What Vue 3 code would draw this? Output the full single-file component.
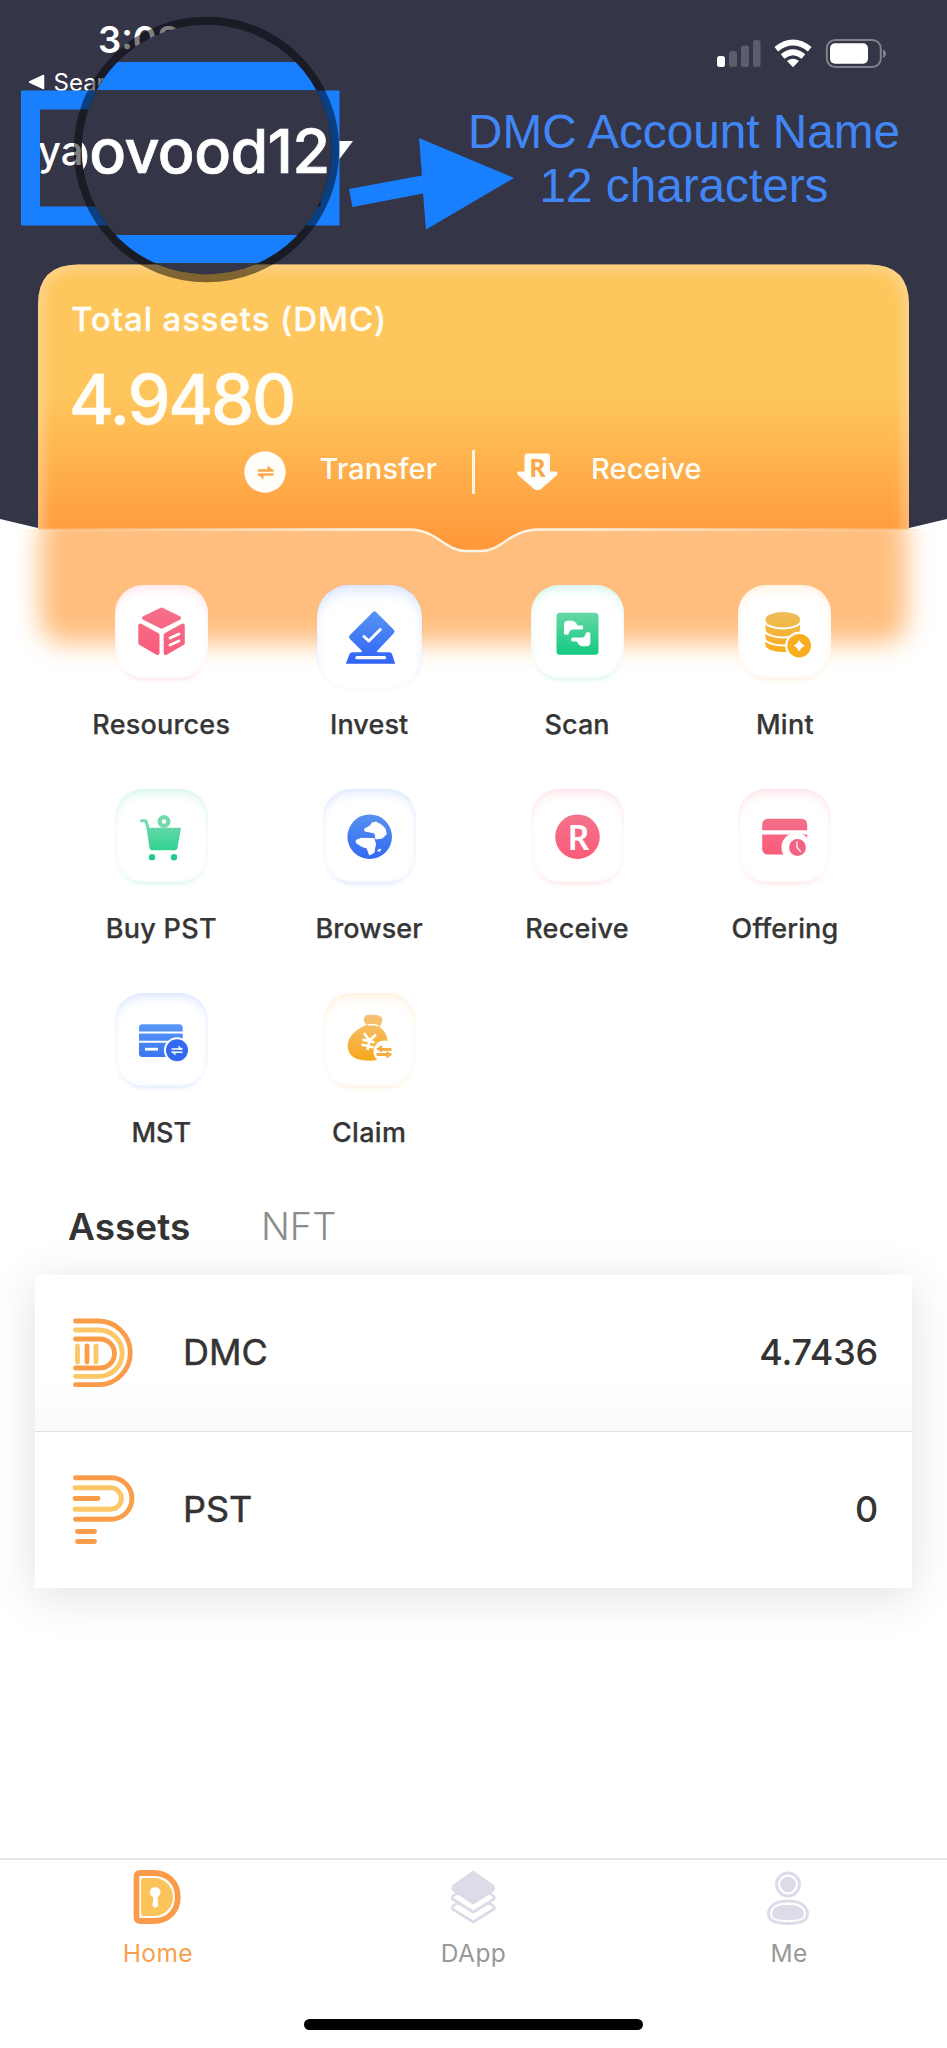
<script setup>
const tiles = [
  { id: 'resources', label: 'Resources', tone: 'pink', box: '115 585 93 93', ls: 0.2 },
  { id: 'invest', label: 'Invest', tone: 'blue', box: '323.5 591 93 93', ls: 0.1, large: true },
  { id: 'scan', label: 'Scan', tone: 'green', box: '530.5 585 93 93', ls: 0.1 },
  { id: 'mint', label: 'Mint', tone: 'gold', box: '738.5 585 93 93', ls: 0.3 },
  { id: 'buy', label: 'Buy PST', tone: 'green', box: '115 789 93 93', ls: 0.3 },
  { id: 'browser', label: 'Browser', tone: 'blue', box: '323 789 93 93', ls: 0.1 },
  { id: 'receive', label: 'Receive', tone: 'pink', box: '530.5 789 93 93', ls: 0.2 },
  { id: 'offering', label: 'Offering', tone: 'pink', box: '738.5 789 93 93', ls: 0.1 },
  { id: 'mst', label: 'MST', tone: 'blue', box: '115 993 93 93', ls: 0 },
  { id: 'claim', label: 'Claim', tone: 'gold', box: '323 993 93 93', ls: 0.3 },
]
</script>

<template>
  <div class="screen">
    <section class="hero">
      <div class="status">
        <span class="time">3:08</span>
        <div class="indicators">
          <svg width="172" height="32" viewBox="716 38 172 32">
            <rect x="717" y="56" width="8" height="11" rx="2.5" fill="#fff" />
            <rect x="729" y="51" width="8" height="16" rx="2.5" fill="#5d5e6d" />
            <rect x="741" y="45.500" width="8" height="21.500" rx="2.500" fill="#5d5e6d" />
            <rect x="753" y="40" width="7.500" height="27" rx="2.500" fill="#5d5e6d" />
            <g fill="none" stroke="#fff" stroke-width="5.800">
              <path d="M776.300 49.200Q793 35.800 809.700 49.200" />
              <path d="M782.600 56.600Q793 48 803.400 56.600" />
            </g>
            <path d="M787 61Q793 56.600 799 61L793 67.200Z" fill="#fff" />
            <rect x="826.800" y="40" width="54" height="27" rx="8.500" fill="none" stroke="#80818c" stroke-width="2" />
            <rect x="830" y="43.300" width="38" height="20.500" rx="5" fill="#fff" />
            <path d="M883 49.500Q886 50.500 886 53.500T883 58Z" fill="#80818c" />
          </svg>
        </div>
      </div>
      <div class="back">
        <svg width="17" height="16" viewBox="0 0 17 16"><path d="M1.500 8L15.500 1.500V14.500Z" fill="#fff" stroke="#fff" stroke-width="1.500" stroke-linejoin="round" /></svg>
        <span>Search</span>
      </div>
      <div class="account">
        <span>ya</span>
        <svg width="30" height="20" viewBox="0 0 30 20"><path d="M0 0H30L15 20Z" fill="#fff" /></svg>
      </div>

      <svg class="markup" width="540" height="290" viewBox="0 0 540 290">
        <rect x="30.500" y="100" width="299.500" height="116" fill="none" stroke="#187fff" stroke-width="19" />
        <path d="M349 189L422 175.500L419 138L514 178L426 229.500L423 193.500L352.500 207Z" fill="#187fff" />
        <clipPath id="lens"><circle cx="206.500" cy="149.500" r="125" /></clipPath>
        <g clip-path="url(#lens)">
          <rect x="70" y="15" width="275" height="270" fill="#343648" />
          <rect x="70" y="62" width="275" height="28" fill="#187fff" />
          <rect x="70" y="235" width="275" height="28" fill="#187fff" />
          <text class="lens-text" x="53" y="173" textLength="277">oovood12</text>
        </g>
        <circle cx="206.500" cy="149.500" r="128.700" fill="none" stroke="#000" stroke-opacity=".5" stroke-width="8" />
      </svg>
      <div class="note">DMC Account Name<br />12 characters</div>
    </section>

    <section class="balance">
      <div class="glow"><i></i></div>
      <svg class="card-shape" width="871" height="290" viewBox="38 264 871 290">
        <defs>
          <linearGradient id="gold" gradientUnits="userSpaceOnUse" x1="0" y1="264" x2="0" y2="551">
            <stop offset="0" stop-color="#fec75d" />
            <stop offset=".46" stop-color="#fec65c" />
            <stop offset=".92" stop-color="#ff9d3f" />
            <stop offset="1" stop-color="#ff9838" />
          </linearGradient>
          <clipPath id="card-clip"><path d="M38 529.500V304.500Q38 264.500 78 264.500H869Q909 264.500 909 304.500V529.500H538C510 529.500 502 551 481 551H466C445 551 437 529.500 409 529.500Z" /></clipPath>
          <filter id="soft" x="-10%" y="-10%" width="120%" height="130%"><feGaussianBlur stdDeviation="6" /></filter>
        </defs>
        <g clip-path="url(#card-clip)">
          <rect x="38" y="264" width="871" height="290" fill="url(#gold)" />
          <path d="M38 580V304Q38 264 78 264H869Q909 264 909 304V580" fill="none" stroke="#ffe0b4" stroke-opacity=".6" stroke-width="11" filter="url(#soft)" />
        </g>
        <linearGradient id="edge" gradientUnits="userSpaceOnUse" x1="38" y1="0" x2="909" y2="0">
          <stop offset="0" stop-color="#fff0df" stop-opacity=".15" />
          <stop offset=".38" stop-color="#fff3e4" />
          <stop offset=".62" stop-color="#fff3e4" />
          <stop offset="1" stop-color="#fff0df" stop-opacity=".15" />
        </linearGradient>
        <path d="M38 529.500H409C437 529.500 445 551 466 551H481C502 551 510 529.500 538 529.500H909" fill="none" stroke="url(#edge)" stroke-width="2.400" />
      </svg>
      <div class="total-label">Total assets (DMC)</div>
      <div class="total">4.9480</div>
      <div class="actions">
        <svg width="42" height="42" viewBox="0 0 42 42">
          <circle cx="21" cy="21" r="20.700" fill="#fffefa" />
          <path d="M14 19.500H29.500M14 23.500H29.500" stroke="#fba84a" stroke-width="2.500" />
          <path d="M23.500 14.500L29.500 19.800H23.500ZM19.500 28.500L13.500 23.200H19.500Z" fill="#fba84a" />
        </svg>
        <span class="transfer">Transfer</span>
        <i class="bar"></i>
        <svg width="42" height="40" viewBox="517 452.500 42 40">
          <path d="M527 454H547.500Q550 454 550 457V472H556Q558.500 473 557 475.500L541 489.500Q537.500 492 534 489.500L518 475.500Q516 473 519 472H524.500V457Q524.500 454 527 454Z" fill="#fffefa" />
          <text class="r-small" x="537.500" y="477" text-anchor="middle">R</text>
        </svg>
        <span class="receive">Receive</span>
      </div>
    </section>

    <section class="grid">
      <div v-for="t in tiles" :key="t.id" class="cell">
        <div class="tile" :class="[t.tone, { large: t.large }]">
          <svg width="93" height="93" :viewBox="t.box">
            <template v-if="t.id === 'resources'">
              <linearGradient id="g1" x1="0" y1="607" x2="0" y2="655" gradientUnits="userSpaceOnUse"><stop stop-color="#f4718b" /><stop offset="1" stop-color="#fa5c7b" /></linearGradient>
              <g fill="url(#g1)" stroke="url(#g1)" stroke-width="4" stroke-linejoin="round">
                <path d="M161.600 609.500L179 618L161.600 626.700L144 618Z" />
                <path d="M140.300 625.500L157.500 635V653L140.300 643Z" />
                <path d="M182.800 625.500L165.700 635V653L182.800 643Z" />
              </g>
              <path d="M170 638L179 634M170 645L179 641" stroke="#fff" stroke-width="2.800" stroke-linecap="round" />
            </template>
            <template v-else-if="t.id === 'invest'">
              <linearGradient id="g2" x1="0" y1="611" x2="0" y2="664" gradientUnits="userSpaceOnUse"><stop stop-color="#5794f4" /><stop offset="1" stop-color="#2f63f6" /></linearGradient>
              <path d="M375 614L392.500 631.500L375 650L375.500 655H364L365 650L352 637Z" fill="url(#g2)" stroke="url(#g2)" stroke-width="5" stroke-linejoin="round" />
              <path d="M353 652.300H390Q392 652.300 392.500 654L395.700 663.700H346.300L350 654Q350.700 652.300 353 652.300Z" fill="url(#g2)" />
              <path d="M357.500 657.700H385" stroke="#fff" stroke-width="3.300" stroke-linecap="round" />
              <path d="M364.500 636.500L369.300 641L380.800 629.500" fill="none" stroke="#fff" stroke-width="3" stroke-linecap="round" stroke-linejoin="round" />
            </template>
            <template v-else-if="t.id === 'scan'">
              <linearGradient id="g3" x1="0" y1="612" x2="0" y2="655" gradientUnits="userSpaceOnUse"><stop stop-color="#68d7a5" /><stop offset="1" stop-color="#11ca80" /></linearGradient>
              <rect x="556" y="612.700" width="42" height="42" rx="3.500" fill="url(#g3)" />
              <g fill="#fff" stroke="#fff" stroke-width="1" stroke-linejoin="round">
                <path d="M564 634V624Q564 621.200 567 621.200H571.500Q575.500 621.500 576.500 626H582V629H572Q568.500 629.500 567.500 634.200Z" />
                <path transform="rotate(180 576.700 633.500)" d="M564 634V624Q564 621.200 567 621.200H571.500Q575.500 621.500 576.500 626H582V629H572Q568.500 629.500 567.500 634.200Z" />
              </g>
            </template>
            <template v-else-if="t.id === 'mint'">
              <linearGradient id="g4" x1="0" y1="612" x2="0" y2="655" gradientUnits="userSpaceOnUse"><stop stop-color="#eebd5e" /><stop offset="1" stop-color="#fbaa14" /></linearGradient>
              <path d="M766 619.300A17.300 7.300 0 0 1 800.600 619.300V645A17.300 7 0 0 1 766 645Z" fill="url(#g4)" />
              <g fill="none" stroke="#fff" stroke-width="2">
                <path d="M765 620.500A17.800 7.800 0 0 0 801.600 620.500" />
                <path d="M765 629.500A17.800 7.800 0 0 0 801.600 629.500" />
                <path d="M765 637.500A17.800 7.800 0 0 0 801.600 637.500" />
              </g>
              <circle cx="799.700" cy="645.700" r="14" fill="#fff" />
              <circle cx="799.700" cy="645.700" r="11.800" fill="#f9ae20" />
              <path d="M799.700 640.700Q801 644.400 804.700 645.700Q801 647 799.700 650.700Q798.400 647 794.700 645.700Q798.400 644.400 799.700 640.700Z" fill="#fff" stroke="#fff" />
            </template>
            <template v-else-if="t.id === 'buy'">
              <linearGradient id="g5" x1="0" y1="815" x2="0" y2="860" gradientUnits="userSpaceOnUse"><stop stop-color="#7ddcb1" /><stop offset="1" stop-color="#1dce89" /></linearGradient>
              <path d="M141.500 820.800H145.300Q146.300 821 146.500 822.500L148.500 830" fill="none" stroke="#72d9ab" stroke-width="3" stroke-linecap="round" />
              <path d="M146.500 827.700H181L177.500 848Q177 850.300 175 850.300H152Q150 850.300 149.500 848Z" fill="url(#g5)" />
              <circle cx="164" cy="821.500" r="4.400" fill="#fff" stroke="#74daac" stroke-width="4.200" />
              <circle cx="152" cy="857.300" r="3.200" fill="#26cb8b" /><circle cx="174" cy="857.300" r="3.200" fill="#26cb8b" />
            </template>
            <template v-else-if="t.id === 'browser'">
              <linearGradient id="g6" x1="0" y1="815" x2="0" y2="860" gradientUnits="userSpaceOnUse"><stop stop-color="#5590ee" /><stop offset="1" stop-color="#3269f2" /></linearGradient>
              <circle cx="369.700" cy="836.700" r="22.300" fill="url(#g6)" />
              <g fill="#fff" stroke="#fff" stroke-linejoin="round">
                <path d="M364.500 829L370 826L372 823L376 822L381.500 825L385 828.500L386.300 834L382.500 838L375.800 839L374.800 833L370 832L364.800 831Z" />
                <path d="M356 840.500L361 838.300L374 838.500L375.500 844L374 852.500L369.500 855L367 848L362 846.500L356.500 843Z" />
                <path d="M377.500 850.500L380.500 849L379.500 851.500Z" />
              </g>
            </template>
            <template v-else-if="t.id === 'receive'">
              <linearGradient id="g7" x1="0" y1="815" x2="0" y2="860" gradientUnits="userSpaceOnUse"><stop stop-color="#f4728b" /><stop offset="1" stop-color="#fb5a78" /></linearGradient>
              <circle cx="577" cy="836.700" r="22.300" fill="url(#g7)" />
              <text class="r-big" x="578" y="849.700" text-anchor="middle">R</text>
            </template>
            <template v-else-if="t.id === 'offering'">
              <linearGradient id="g8" x1="0" y1="818" x2="0" y2="855" gradientUnits="userSpaceOnUse"><stop stop-color="#f4708b" /><stop offset="1" stop-color="#fa5b7a" /></linearGradient>
              <rect x="762.700" y="818.700" width="45" height="35.800" rx="5.500" fill="url(#g8)" />
              <rect x="762" y="830.300" width="46.500" height="4.200" fill="#fff" />
              <path d="M784.700 856A13.500 13.500 0 0 1 808.500 839V856Z" fill="#fff" />
              <circle cx="798" cy="847.500" r="8.400" fill="#f4627f" />
              <path d="M797.500 842V847.500L801 851.500" fill="none" stroke="#fff" stroke-opacity=".8" stroke-width="1.600" stroke-linecap="round" />
            </template>
            <template v-else-if="t.id === 'mst'">
              <linearGradient id="g9" x1="0" y1="1024" x2="0" y2="1057" gradientUnits="userSpaceOnUse"><stop stop-color="#5a98fa" /><stop offset="1" stop-color="#3b76ee" /></linearGradient>
              <rect x="139" y="1024.300" width="43.700" height="32.600" rx="3.500" fill="url(#g9)" />
              <path d="M138 1032.500H184M138 1041.800H184" stroke="#fff" stroke-width="2" />
              <path d="M145 1049.200H158" stroke="#fff" stroke-width="2.800" />
              <circle cx="177" cy="1050.300" r="13" fill="#fff" />
              <circle cx="177" cy="1050.300" r="11" fill="#3169f3" />
              <path d="M171.500 1049H182.500M171.500 1052.200H182.500" stroke="#fff" stroke-width="1.500" />
              <path d="M178.500 1045.500L182.500 1049.500H178.500ZM175.500 1055.500L171.500 1051.700H175.500Z" fill="#fff" />
            </template>
            <template v-else>
              <linearGradient id="g10" x1="0" y1="1015" x2="0" y2="1061" gradientUnits="userSpaceOnUse"><stop stop-color="#f5c377" /><stop offset="1" stop-color="#f8a71b" /></linearGradient>
              <path d="M364.500 1017Q366 1014 370 1015Q378 1014 381.500 1017Q384 1020 379.500 1027Q387 1032 388 1043Q390 1058 377 1060Q368 1062 357 1059Q347 1055 347.700 1045Q349 1032 366.500 1025Q362 1019 364.500 1017Z" fill="url(#g10)" />
              <path d="M367.500 1025Q373 1023.500 378.500 1026" stroke="#fff" stroke-width="1.600" fill="none" />
              <path d="M364 1033L369.500 1040.500L376 1034.500M369.500 1040.500L367.500 1050M362.500 1039.500L374.500 1042.500M361.500 1044.500L373.500 1047.500" stroke="#fff" stroke-width="2.600" fill="none" />
              <circle cx="384.500" cy="1051.500" r="11" fill="#fff" />
              <path d="M380 1049.500H391.500M376.500 1054.500H388" stroke="#f3ae44" stroke-width="2.800" />
              <path d="M382 1045V1052.500L376 1049ZM386.500 1051V1058.500L392.500 1054.500Z" fill="#f3ae44" />
            </template>
          </svg>
        </div>
        <span class="label" :style="{ letterSpacing: t.ls + 'px' }">{{ t.label }}</span>
      </div>
    </section>

    <nav class="tabs"><span class="on">Assets</span><span class="off">NFT</span></nav>

    <section class="list">
      <div class="row">
        <svg width="64" height="72" viewBox="72 1317 64 72" fill="none" stroke-width="4.800" stroke-linecap="round">
          <path d="M75.500 1321H98.500A31.850 31.850 0 0 1 98.500 1384.700H75.500" stroke="#fa9c48" />
          <path d="M75.500 1330H99A23.150 23.150 0 0 1 99 1376.300H75.500" stroke="#fcc766" />
          <path d="M75.500 1339H100A14.500 14.500 0 0 1 100 1368H75.500" stroke="#fa9c48" />
          <path d="M77.500 1346V1362M96 1346V1362" stroke="#fcc766" /><path d="M87 1346V1362" stroke="#fa9c48" />
        </svg>
        <span class="name">DMC</span><span class="value">4.7436</span>
      </div>
      <div class="row">
        <svg width="64" height="72" viewBox="72 1474.500 64 72" fill="none" stroke-width="4.900" stroke-linecap="round">
          <path d="M75.500 1478.300H111.300A20.700 20.700 0 0 1 111.300 1519.700H75.500" stroke="#fa9c48" />
          <path d="M75 1488.300H110.700A10.700 10.700 0 0 1 110.700 1509.700H75" stroke="#fcc766" />
          <path d="M75 1499H98M77.500 1532H94.500M77.500 1542H94.500" stroke="#fa9c48" />
        </svg>
        <span class="name">PST</span><span class="value">0</span>
      </div>
    </section>

    <footer class="tabbar">
      <div class="tab active">
        <svg width="50" height="56" viewBox="133.500 1869 50 56">
          <path d="M141 1873H154C169 1873 178.300 1883 178.300 1897S169 1921 154 1921H141Q137 1921 137 1917V1877Q137 1873 141 1873Z" fill="#fff" stroke="#f99b4b" stroke-width="5.800" />
          <path d="M144 1878H154C165 1878 173.500 1886 173.500 1897S165 1916 154 1916H144Q141.500 1916 141.500 1913.500V1880.500Q141.500 1878 144 1878Z" fill="#fcc35a" />
          <circle cx="155.700" cy="1892.200" r="5.300" fill="#fff" /><path d="M154.300 1895H157.500L158.200 1906Q155.700 1908.500 153.500 1906Z" fill="#fff" stroke="#fff" />
        </svg>
        <span>Home</span>
      </div>
      <div class="tab">
        <svg width="50" height="56" viewBox="449 1869 50 56" fill="none" stroke="#dcdce9" stroke-width="2.700" stroke-linejoin="round">
          <path d="M473.300 1922L452.500 1909Q451.500 1907.500 453 1906L458 1902.500L473.300 1912L488.500 1902.500L493.500 1906Q495 1907.500 494 1909Z" />
          <path d="M473.300 1912L452.500 1899Q451.500 1897.500 453 1896L458 1892.500L473.300 1902L488.500 1892.500L493.500 1896Q495 1897.500 494 1899Z" fill="#fff" />
          <path d="M473.300 1872L454 1885.500Q451.500 1888 454 1890.500L473.300 1903L492.500 1890.500Q495 1888 492.500 1885.500Z" fill="#dcdce9" />
        </svg>
        <span>DApp</span>
      </div>
      <div class="tab">
        <svg width="50" height="56" viewBox="764 1869 50 56" fill="#dcdce9">
          <circle cx="788" cy="1884.500" r="11.500" fill="#fff" stroke="#dcdce9" stroke-width="3" />
          <circle cx="788" cy="1884.500" r="7.800" />
          <path d="M768.500 1914C768.500 1906 776 1901 788 1901S807.500 1906 807.500 1914C807.500 1921 801 1923.500 788 1923.500S768.500 1921 768.500 1914Z" fill="#fff" stroke="#dcdce9" stroke-width="3" />
          <path d="M772 1914C772 1908 778 1904.700 788 1904.700S804 1908 804 1914C804 1918.500 799 1920.200 788 1920.200S772 1918.500 772 1914Z" />
        </svg>
        <span>Me</span>
      </div>
    </footer>
    <div class="home-indicator"></div>
  </div>
</template>

<style>
body { background: #fff; }
</style>

<style scoped>
.screen { width: 947px; height: 2048px; position: relative; overflow: hidden; display: flex; flex-direction: column; background: #fff; font-family: Inter, "Liberation Sans", sans-serif; color: #333; }
.screen svg { display: block; flex: none; }
.hero { height: 264px; position: relative; flex: none; }
.hero::before { content: ""; position: absolute; inset: 0 0 auto 0; height: 530px; background: #343648; clip-path: polygon(0 0, 100% 0, 100% 519px, 909px 528px, 38px 528px, 0 519px); }
.status, .back, .account { position: relative; display: flex; align-items: center; color: #fff; }
.status { height: 70px; padding: 0 59px 0 98px; justify-content: space-between; align-items: flex-start; }
.time { font-size: 36.500px; font-weight: 600; line-height: 40px; margin-top: 19.500px; }
.indicators { margin-top: 38px; }
.back { height: 24px; margin-top: 0; padding-left: 27.500px; gap: 9px; font-size: 24px; }
.account { height: 60px; margin-top: 27px; padding-left: 38px; font-size: 40px; font-weight: 500; line-height: 60px; }
.account svg { margin-left: 239px; }
.account span { width: 46px; white-space: nowrap; }
.markup { position: absolute; left: 0; top: 0; z-index: 3; }
.lens-text { font: 500 61px Inter, sans-serif; fill: #fff; stroke: #fff; stroke-width: .7px; }
.note { position: absolute; left: 460px; top: 104.500px; width: 448px; text-align: center; color: #4286f6; font: 47.700px/54.500px "Liberation Sans", Arial, sans-serif; white-space: nowrap; z-index: 4; }
.balance { position: relative; height: 321px; margin: 0 38px; flex: none; color: #fffdf8; }
.card-shape { position: absolute; left: 0; top: 0; }
.glow { position: absolute; left: -38px; right: -38px; top: 265px; height: 170px; overflow: hidden; }
.glow i { position: absolute; left: 40px; right: 40px; top: -20px; height: 134px; background: #ffbe7e; border-radius: 24px; filter: blur(13px); }
.total-label, .total, .actions { position: relative; }
.total-label { padding: 35px 0 0 33px; font-size: 33px; line-height: 40px; font-weight: 500; letter-spacing: .9px; white-space: nowrap; -webkit-text-stroke: .3px #fffdf8; }
.total { padding: 21px 0 0 31px; font-size: 68.500px; line-height: 80px; font-weight: 500; letter-spacing: -2.200px; -webkit-text-stroke: .5px #fffdf8; }
.actions { display: flex; align-items: center; height: 44px; margin-top: 9.500px; padding-left: 205.500px; font-size: 29px; font-weight: 500; letter-spacing: .15px; }
.actions span { line-height: 42px; margin-top: -5px; white-space: nowrap; }
.transfer { margin-left: 34px; width: 152.500px; }
.bar { width: 2.500px; height: 44px; background: #fff5e6; margin-right: 42px; }
.receive { margin-left: 32.500px; }
.r-small { font: 700 25px "Noto Sans", sans-serif; fill: #fba84a; }
.r-big { font: 600 34px "Noto Sans", sans-serif; fill: #fff; }
.grid { position: relative; display: grid; grid-template-columns: repeat(4, 207.900px); grid-auto-rows: 204px; padding-left: 57.300px; flex: none; }
.cell { display: flex; flex-direction: column; align-items: center; }
.tile { width: 93px; height: 93px; border-radius: 28px; background: #fff; --c: 255, 110, 130; box-shadow: inset 0 8px 10px -3px rgba(var(--c), .15), inset 0 0 5px rgba(var(--c), .07), 0 6px 4px -4px rgba(var(--c), .18); }
.blue { --c: 70, 130, 255; }
.green { --c: 40, 205, 150; }
.gold { --c: 255, 175, 70; }
.large { width: 105px; height: 104px; margin-bottom: -11px; padding: 6px; box-sizing: border-box; border-radius: 32px; box-shadow: inset 0 10px 13px -4px rgba(var(--c), .2), inset 0 0 5px rgba(var(--c), .06), 0 0 2px rgba(var(--c), .08); }
.label { margin-top: 27px; font-size: 27px; line-height: 40px; font-weight: 500; color: #363636; white-space: nowrap; -webkit-text-stroke: .25px #363636; }
.tabs { display: flex; align-items: center; height: 50px; margin-top: 4px; padding-left: 68px; flex: none; }
.on { font-size: 37px; font-weight: 600; width: 193px; }
.off { font-size: 38px; font-weight: 300; color: #8c8c8c; }
.list { position: relative; width: 877px; height: 313px; margin: 24px 0 0 35px; flex: none; box-shadow: 0 8px 45px rgba(0, 0, 0, .12); background: #fff; }
.row { height: 156.500px; box-sizing: border-box; padding: 0 34px 0 37px; display: flex; align-items: center; font-size: 36px; font-weight: 500; }
.row:first-child { border-bottom: 1.500px solid #dedede; background: linear-gradient(#fff 68%, #fafafa); }
.name, .value { position: relative; top: -1px; }
.name { margin-left: 47px; flex: 1; font-weight: 400; -webkit-text-stroke: .5px #333; }
.value { letter-spacing: -.2px; }
.tabbar { position: absolute; left: 0; right: 0; top: 1858px; height: 140px; border-top: 2px solid #e4e4e4; display: flex; padding: 9px 0 0; box-sizing: border-box; }
.tab { flex: 1; display: flex; flex-direction: column; align-items: center; color: #999; font-size: 24.500px; letter-spacing: .4px; line-height: 34px; gap: 10.500px; }
.active { color: #f7a04e; }
.home-indicator { position: absolute; left: 304px; top: 2019px; width: 339px; height: 11px; border-radius: 6px; background: #000; }
</style>
